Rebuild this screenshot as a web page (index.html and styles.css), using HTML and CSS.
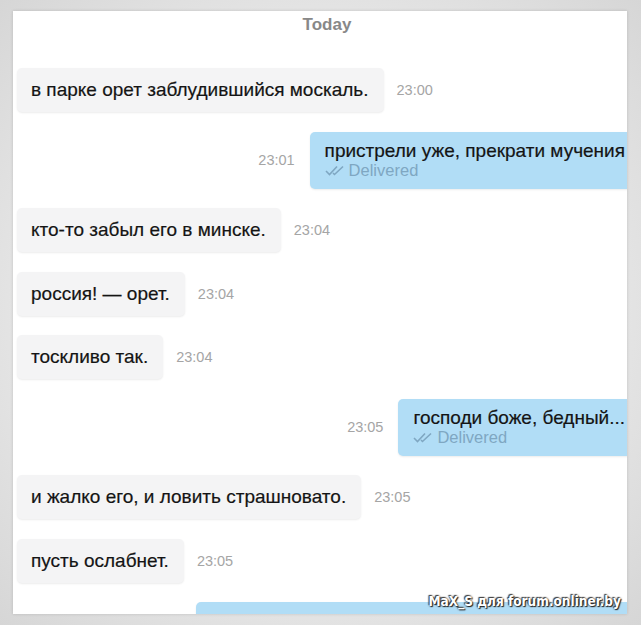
FILE: index.html
```html
<!DOCTYPE html>
<html lang="ru">
<head>
    <meta charset="UTF-8">
    <meta name="viewport" content="width=device-width, initial-scale=1.0">
    <title>Chat</title>
    <link rel="stylesheet" href="styles.css">
</head>
<body>
    <div class="panel">
        <div class="day">Today</div>
        <div class="messages">
            <div class="row">
                <div class="bubble">в парке орет заблудившийся москаль.</div>
                <span class="time">23:00</span>
            </div>
            <div class="row out">
                <span class="time">23:01</span>
                <div class="bubble blue">
                    <div>пристрели уже, прекрати мучения</div>
                    <div class="status">
                        <svg width="20" height="11" viewBox="0 0 20 11"><path d="M1 6 L4.5 9.5 L12 1.5 M8 8 L9.5 9.5 L18 1.5" fill="none" stroke="#7fa7c2" stroke-width="1.6"/></svg>
                        Delivered
                    </div>
                </div>
            </div>
            <div class="row">
                <div class="bubble">кто-то забыл его в минске.</div>
                <span class="time">23:04</span>
            </div>
            <div class="row">
                <div class="bubble">россия! — орет.</div>
                <span class="time">23:04</span>
            </div>
            <div class="row">
                <div class="bubble">тоскливо так.</div>
                <span class="time">23:04</span>
            </div>
            <div class="row out">
                <span class="time">23:05</span>
                <div class="bubble blue">
                    <div>господи боже, бедный...</div>
                    <div class="status">
                        <svg width="20" height="11" viewBox="0 0 20 11"><path d="M1 6 L4.5 9.5 L12 1.5 M8 8 L9.5 9.5 L18 1.5" fill="none" stroke="#7fa7c2" stroke-width="1.6"/></svg>
                        Delivered
                    </div>
                </div>
            </div>
            <div class="row">
                <div class="bubble">и жалко его, и ловить страшновато.</div>
                <span class="time">23:05</span>
            </div>
            <div class="row">
                <div class="bubble">пусть ослабнет.</div>
                <span class="time">23:05</span>
            </div>
            <div class="row out">
                <div class="bubble blue wide">&nbsp;</div>
            </div>
        </div>
        <div class="watermark">MaX_S для forum.onliner.by</div>
    </div>
</body>
</html>
```

FILE: styles.css
```css
html, body {
    margin: 0;
    height: 625px;
    overflow: hidden;
}
body {
    padding: 11px 14px 11px 13px;
    box-sizing: border-box;
    background: radial-gradient(ellipse at center, #e9e9e9 55%, #d6d6d6 100%);
    font-family: "Liberation Sans", Arial, sans-serif;
}
.panel {
    position: relative;
    height: 603px;
    background: #ffffff;
    overflow: hidden;
    box-shadow: 0 0 3px rgba(0, 0, 0, 0.15);
}
.day {
    padding-top: 4px;
    padding-left: 14px;
    line-height: 20px;
    text-align: center;
    font-weight: bold;
    font-size: 17px;
    color: #888888;
}
.messages {
    display: flex;
    flex-direction: column;
    gap: 19.5px;
    margin-top: 33px;
    padding-left: 4px;
}
.row {
    display: flex;
    align-items: center;
    gap: 13px;
}
.row.out {
    justify-content: flex-end;
    margin-right: -13px;
    gap: 15px;
}
.bubble {
    background: #f4f4f5;
    border-radius: 5px;
    padding: 0 15px 0 14px;
    height: 44px;
    display: flex;
    align-items: center;
    font-size: 19px;
    color: #141414;
    -webkit-text-stroke: 0.2px #141414;
    box-shadow: 0 1px 2px rgba(0, 0, 0, 0.08);
}
.bubble.blue {
    background: #b1ddf6;
    flex-direction: column;
    align-items: flex-start;
    justify-content: center;
    height: 57px;
    padding: 0 15px;
    line-height: 21px;
}
.bubble.wide {
    width: 414px;
}
.status {
    display: flex;
    align-items: center;
    gap: 4px;
    font-size: 16.5px;
    line-height: 19px;
    color: #7fa7c2;
    -webkit-text-stroke: 0;
}
.time {
    font-size: 14.5px;
    color: #a5a5a5;
}
.watermark {
    position: absolute;
    right: 6px;
    bottom: 5px;
    font-family: "DejaVu Sans Condensed", "DejaVu Sans", sans-serif;
    font-weight: bold;
    font-size: 13.5px;
    color: #ffffff;
    text-shadow: 0 0 2px #222, 1px 1px 1px #222, -1px -1px 1px #444;
}
```
